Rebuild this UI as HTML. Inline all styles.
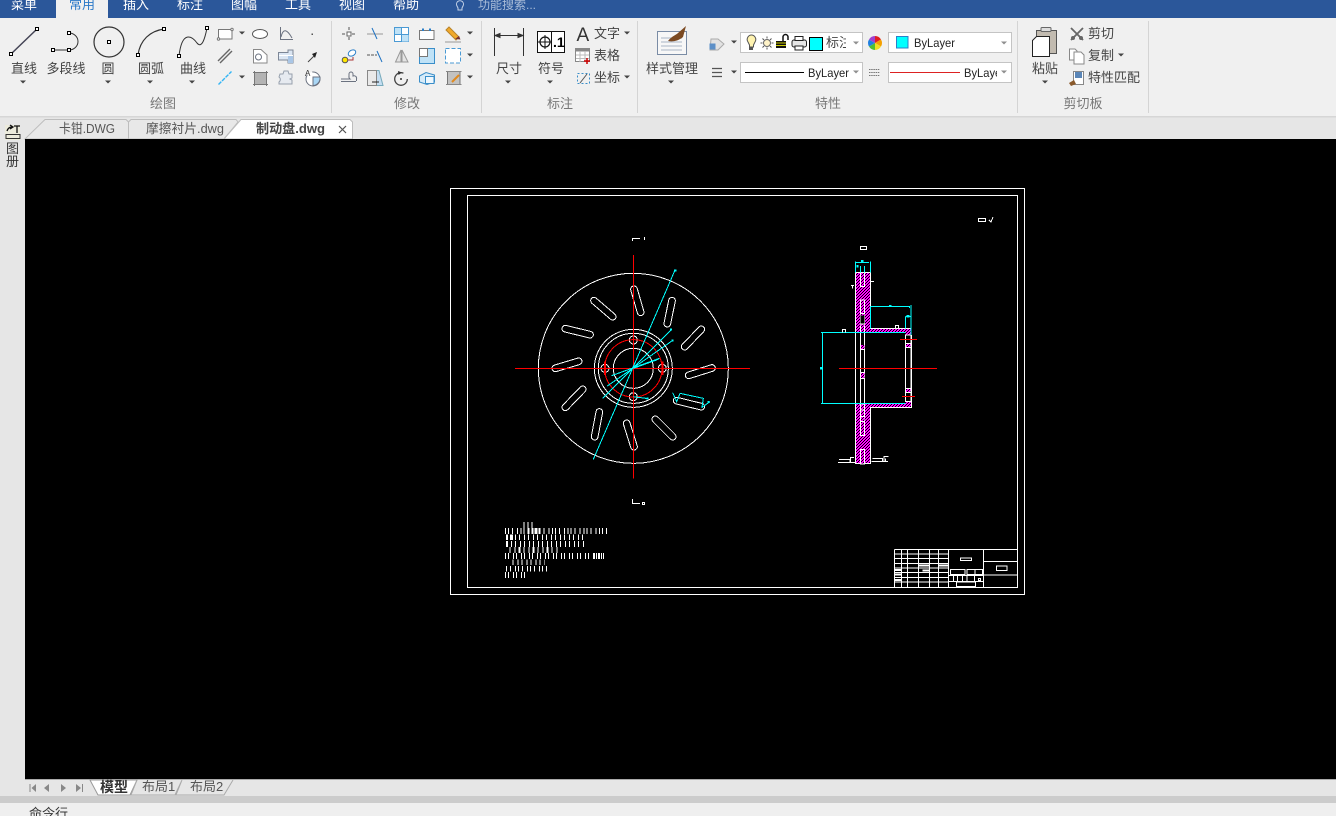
<!DOCTYPE html>
<html><head><meta charset="utf-8"><title>制动盘.dwg</title>
<style>
html,body{margin:0;padding:0;background:#000;overflow:hidden;width:1336px;height:816px}
svg{display:block}
text{font-family:"Liberation Sans","Noto Sans CJK SC",sans-serif;font-size:13px;fill:#444}
.m{text-anchor:middle}
.t{fill:#fff;text-anchor:middle}
.i{fill:none;stroke:#6b7280;stroke-width:1}
.h{fill:#fff;stroke:#222;stroke-width:1}
.s{fill:#fff;stroke:#000;stroke-width:1}
.w{fill:none;stroke:#fff;stroke-width:3}
.c{fill:none;stroke:#00ffff;stroke-width:3}
.r{fill:none;stroke:#f00;stroke-width:3}
</style></head><body>
<svg width="1336" height="816" viewBox="0 0 1336 816" xmlns="http://www.w3.org/2000/svg">
<defs>
<pattern id="hatch" width="9" height="9" patternUnits="userSpaceOnUse"><rect width="9" height="9" fill="#ff00ff"/><rect x="0" y="0" width="3" height="3" fill="#000"/><rect x="3" y="6" width="3" height="3" fill="#000"/><rect x="6" y="3" width="3" height="3" fill="#000"/></pattern>
<path id="ar" d="M-3-1.500H3L0 1.500Z" fill="#444"/>
</defs>
<rect width="1336" height="816" fill="#e6e6e6"/>
<rect width="1336" height="18" fill="#2b579a"/>
<rect x="0" y="18" width="1336" height="98" fill="#f0f0f0"/>
<rect x="0" y="116" width="1336" height="1.500" fill="#d6d6d6"/>
<rect x="56" y="0" width="52" height="19" fill="#f0f0f0"/>
<g>
<text class="t" x="24" y="9">菜单</text><text class="m" x="82" y="9" style="fill:#2a78c8">常用</text><text class="t" x="136" y="9">插入</text><text class="t" x="190" y="9">标注</text><text class="t" x="244" y="9">图幅</text><text class="t" x="298" y="9">工具</text><text class="t" x="352" y="9">视图</text><text class="t" x="406" y="9">帮助</text>
<path d="M457 6a3.500 3.500 0 1 1 6 0l-1 2v2h-4V8z" fill="none" stroke="#c5d3e8"/>
<text x="478" y="9" style="font-size:12px;fill:#a9bcd8">功能搜索...</text>
</g>
<g stroke="#d4d4d4"><path d="M331.500 21V113M481.500 21V113M637.500 21V113M1017.500 21V113M1148.500 21V113"/></g>
<g class="labels">
<text class="m" x="24" y="73">直线</text><text class="m" x="66" y="73">多段线</text><text class="m" x="108" y="73">圆</text><text class="m" x="151" y="73">圆弧</text><text class="m" x="193" y="73">曲线</text>
<text class="m" x="163" y="108" style="fill:#777">绘图</text><text class="m" x="407" y="108" style="fill:#777">修改</text><text class="m" x="560" y="108" style="fill:#777">标注</text><text class="m" x="828" y="108" style="fill:#777">特性</text><text class="m" x="1083" y="108" style="fill:#777">剪切板</text>
<text class="m" x="509" y="73">尺寸</text><text class="m" x="551" y="73">符号</text><text x="594" y="38">文字</text><text x="594" y="60">表格</text><text x="594" y="82">坐标</text>
<text class="m" x="672" y="73">样式管理</text><text class="m" x="1045" y="73">粘贴</text><text x="1088" y="38">剪切</text><text x="1088" y="60">复制</text><text x="1088" y="82">特性匹配</text>
</g>
<g>
<use href="#ar" x="23" y="82"/><use href="#ar" x="108" y="82"/><use href="#ar" x="150" y="82"/><use href="#ar" x="192" y="82"/><use href="#ar" x="242" y="33"/><use href="#ar" x="242" y="77"/><use href="#ar" x="470" y="33"/><use href="#ar" x="470" y="55"/><use href="#ar" x="470" y="77"/><use href="#ar" x="508" y="82"/><use href="#ar" x="550" y="82"/><use href="#ar" x="627" y="33"/><use href="#ar" x="627" y="77"/><use href="#ar" x="671" y="82"/><use href="#ar" x="734" y="42"/><use href="#ar" x="734" y="72"/><use href="#ar" x="1045" y="82"/><use href="#ar" x="1121" y="55"/>
</g>
<!-- big draw icons -->
<g fill="none" stroke="#333">
<path d="M11 54L37 29" stroke-width="1.500" stroke="#445"/>
<path d="M53 50H69M69 33a9 8.500 0 0 1 0 17"/>
<circle cx="109" cy="42" r="15" stroke-width="1.200"/>
<path d="M138 55C140 40 150 31 164 29" stroke-width="1.200"/>
<path d="M179 56C182 30 192 36 197 43C202 49 205 38 207 28"/>
</g>
<g class="s">
<rect x="9.500" y="52.500" width="3" height="3"/><rect x="35.500" y="27.500" width="3" height="3"/>
<rect x="51.500" y="48.500" width="3" height="3"/><rect x="67.500" y="48.500" width="3" height="3"/><rect x="67.500" y="31.500" width="3" height="3"/>
<rect x="107.500" y="40.500" width="3" height="3"/>
<rect x="136.500" y="53.500" width="3" height="3"/><rect x="162.500" y="27.500" width="3" height="3"/>
<rect x="177.500" y="54.500" width="3" height="3"/><rect x="205.500" y="26.500" width="3" height="3"/>
</g>
<!-- small draw icons -->
<g transform="translate(210 22)">
<rect x="8.500" y="7.500" width="13.500" height="9.500" fill="#fff" stroke="#777"/><circle cx="8.500" cy="17" r="1.200" class="h" style="stroke:#777"/><circle cx="22" cy="7.500" r="1.200" class="h" style="stroke:#777"/>
<ellipse cx="50" cy="12" rx="7.500" ry="4.500" fill="#fff" stroke="#555"/>
<path d="M70.500 5V17.500H83M71 15C73 6 77 7 82 16" class="i"/>
<rect x="101.500" y="11.500" width="1.500" height="1.500" fill="#555"/>
<path d="M8 39L20 27M10 41L22 29" stroke="#666" stroke-width="1.400" fill="none"/>
<path d="M43.500 27.500H51L57 33V41H43.500Z" fill="#fff" stroke="#888"/><circle cx="48.500" cy="35" r="3" class="i"/>
<path d="M68.500 30.500H78V28H83V41H78V38H68.500Z" fill="#dbe6f3" stroke="#7c8696"/><rect x="78" y="34" width="5" height="7" fill="#a9c6e6"/><path d="M69 33.500H83" stroke="#fff"/>
<path d="M98 40L105 33" stroke="#444"/><path d="M102 32L107 30L105 36Z" fill="#222"/>
<path d="M8.500 62.500L21.500 49.500" stroke="#33b5f5" stroke-width="1.400" stroke-dasharray="4 1"/>
<rect x="44.500" y="50.500" width="12" height="12" fill="#b4b4b4" stroke="#777"/><path d="M43 50.500H58M43 62.500H58M44.500 49V64M56.500 49V64" stroke="#777"/>
<path d="M70 52h3l1-3h4l1 3h3v4l-2 1 2 1v4H69v-2a3 3 0 0 0 0-5z" fill="#e6eaf0" stroke="#97a0ad"/>
<circle cx="103" cy="57" r="7" fill="#fff" stroke="#6b7280" stroke-dasharray="26 6"/><path d="M103 55H110A7.500 7.500 0 0 1 103 63.500Z" fill="#a9d6f5" stroke="#6b7280"/><text x="95" y="54" style="font-size:8px;fill:#333">A</text>
</g>
<!-- modify icons -->
<g transform="translate(335 22)">
<path d="M7 12H21M14 5V19" stroke="#555" stroke-dasharray="3 2"/><rect x="12" y="10" width="4" height="4" fill="#fff" stroke="#666"/>
<path d="M32 12H48" stroke="#999"/><path d="M37 6L42 17" stroke="#1f72c2"/>
<rect x="59.500" y="5.500" width="14" height="14" fill="#fff" stroke="#4a9ad4"/><rect x="60" y="6" width="6.500" height="6.500" fill="#bfe2f7"/><rect x="67" y="13" width="6.500" height="6.500" fill="#bfe2f7"/><path d="M66.500 5V20M59 12.500H74" stroke="#4a9ad4"/>
<rect x="84.500" y="8.500" width="14.500" height="9" fill="#fff" stroke="#777"/><path d="M88 6.500v2.500M95 6.500v2.500" stroke="#2b7fc9" stroke-width="2"/>
<path d="M111 8L114 5L124 15L121 18Z" fill="#f1a92b" stroke="#b8832a"/><path d="M120 17l4-3 1.500 3.500z" fill="#733"/><path d="M110 20H126" stroke="#999"/>
<circle cx="10" cy="38" r="2.800" fill="#ffe600" stroke="#555"/><ellipse cx="17" cy="31" rx="4" ry="2.800" fill="#fff" stroke="#2b7fc9" transform="rotate(-30 17 31)"/><path d="M13 38H18V35" stroke="#a33" fill="none"/>
<path d="M32 33H42" stroke="#555" stroke-dasharray="3 1"/><path d="M42 29L47 40" stroke="#1f72c2"/>
<path d="M66 28V40H60.500ZM67 28L73 40H67Z" fill="#e4e4e4" stroke="#999"/>
<rect x="84.500" y="26.500" width="15" height="15" fill="#bfe2f7" stroke="#3a8ec9"/><rect x="84.500" y="26.500" width="8" height="8" fill="#fff" stroke="#777"/>
<rect x="110.500" y="26.500" width="15" height="14.500" fill="#fff" stroke="#4a9ad4" stroke-dasharray="4 2"/>
<path d="M6 59.500H21M6 57H15a3 3 0 0 1-1-3v-2a2 2 0 0 1 4 0v2a2.500 2.500 0 0 1 3.500 3v2" class="i" stroke-width=".9"/>
<path d="M38 48.500H44L48 63.500H38Z" fill="#c5def2" stroke="#7ab"/><rect x="32.500" y="48.500" width="9" height="15" fill="#e9e9e9" stroke="#888"/><path d="M37 60H44" stroke="#222"/>
<circle cx="66" cy="57" r="6.300" fill="none" stroke="#444" stroke-width="1.300" stroke-dasharray="32 8"/><circle cx="66" cy="57" r="1" fill="#333"/><path d="M63 49L67 50.500L63.500 53Z" fill="#333"/>
<path d="M84.500 54L91 50.500L99.500 53V60L92 62.500L84.500 60Z" fill="#d7ebf8" stroke="#3a8ec9"/><rect x="90.500" y="54.500" width="8.500" height="7" fill="#eef7fd" stroke="#3a8ec9"/>
<rect x="112.500" y="49.500" width="12.500" height="13" fill="#c2c2c2" stroke="#777"/><path d="M111 49.500H126.500M111 62.500H126.500" stroke="#888"/><path d="M117 60L124 53" stroke="#e08a1e" stroke-width="2"/>
</g>
<!-- annotate -->
<g fill="none" stroke="#333">
<path d="M494.500 28V56M523.500 28V56M495 35.500H523" />
<path d="M495 35.500L500 33.500V37.500ZM523 35.500L518 33.500V37.500Z" fill="#333"/>
</g>
<rect x="537.500" y="31.500" width="27" height="21" fill="#fff" stroke="#111"/><path d="M551.500 31V52" stroke="#111"/><circle cx="545" cy="42" r="5" fill="none" stroke="#111" stroke-width="1.200"/><path d="M538 42H551M545 35V49" stroke="#111"/>
<text x="553" y="47" style="font-size:14px;font-weight:bold;fill:#000">.1</text>
<text x="576.500" y="41" style="font-size:19px;fill:#333">A</text>
<rect x="575.500" y="48.500" width="14" height="13" fill="#fff" stroke="#888"/><rect x="575.500" y="48.500" width="14" height="3" fill="#888"/><path d="M580 51V62M585 51V62M576 55H589M576 58.500H589" stroke="#bbb"/><path d="M587 58V64M584 61H590" stroke="#c00" stroke-width="1.500"/>
<g stroke="#3a8ec9" stroke-dasharray="2 2" fill="none"><rect x="577.500" y="73.500" width="12" height="10"/></g><path d="M580 83L587 74" stroke="#555"/>
<!-- style mgr -->
<rect x="657.500" y="31.500" width="29" height="23" fill="#f7f7f7" stroke="#7a8ca5"/><path d="M661 38H682M661 42H682M661 46H682M661 50H682" stroke="#a8b4c6"/><path d="M668 41C672 36 676 35 678 33L686 26L683 37C678 41 673 42 668 41Z" fill="#7b4a22"/>
<!-- properties -->
<path d="M711 39H718L724 44L718 50H710Z" fill="#e2e2e2" stroke="#aaa"/><rect x="709.500" y="43.500" width="6" height="6" fill="#5c8fc7"/>
<path d="M712 68.500H722M712 72.500H722M712 76.500H722" stroke="#555" stroke-width="1.300"/>
<g fill="#fff" stroke="#c4c4c4"><rect x="740.500" y="32.500" width="122" height="20"/><rect x="888.500" y="32.500" width="123" height="20"/><rect x="740.500" y="62.500" width="122" height="20"/><rect x="888.500" y="62.500" width="123" height="20"/></g>
<path d="M751 35a4.500 4.500 0 0 1 4 7l-1.500 3v2h-4v-2l-1.500-3a4.500 4.500 0 0 1 3-7z" fill="#fff3b0" stroke="#555"/><rect x="749" y="47" width="4" height="3" fill="#555"/>
<circle cx="767" cy="43" r="3.500" fill="#fff3c8" stroke="#666"/><path d="M767 36.500v2M767 47.500v2M760.500 43h2M771.500 43h2M762.500 38.500l1.500 1.500M770 46l1.500 1.500M771.500 38.500L770 40M764 46l-1.500 1.500" stroke="#555"/>
<rect x="776" y="41" width="10" height="7" fill="#111"/><path d="M776 43h10M776 45.500h10" stroke="#cc0"/><path d="M783 41V37a2.500 2.500 0 0 1 5 0v3" fill="none" stroke="#111" stroke-width="1.500"/>
<rect x="792" y="40" width="14.500" height="7" rx="2" fill="#e6e6e6" stroke="#222"/><rect x="795" y="36.500" width="8" height="4" fill="#fff" stroke="#222"/><rect x="795" y="46" width="8" height="4" fill="#fff" stroke="#222"/>
<rect x="809.500" y="37.500" width="13" height="13" fill="#0ff" stroke="#000"/>
<svg x="826" y="33" width="20" height="19"><text x="0" y="14">标注</text></svg>
<use href="#ar" x="856" y="43" style="opacity:.6"/><use href="#ar" x="856" y="72" style="opacity:.6"/><use href="#ar" x="1004" y="43" style="opacity:.6"/><use href="#ar" x="1004" y="72" style="opacity:.6"/>
<g transform="translate(875 43)"><path d="M0 0V-7A7 7 0 0 1 6-3.500Z" fill="#e02020"/><path d="M0 0L6-3.500A7 7 0 0 1 6 3.500Z" fill="#f5a000"/><path d="M0 0L6 3.500A7 7 0 0 1 0 7Z" fill="#f0e020"/><path d="M0 0V7A7 7 0 0 1-6 3.500Z" fill="#50c030"/><path d="M0 0L-6 3.500A7 7 0 0 1-6-3.500Z" fill="#2080e0"/><path d="M0 0L-6-3.500A7 7 0 0 1 0-7Z" fill="#a040d0"/></g>
<rect x="896.500" y="36.500" width="11.500" height="11.500" fill="#0ff" stroke="#2b7fc9"/>
<text x="914" y="47" textLength="41" lengthAdjust="spacingAndGlyphs" style="font-size:12px;fill:#222">ByLayer</text>
<path d="M745 72.500H804" stroke="#000"/>
<text x="808" y="77" textLength="41" lengthAdjust="spacingAndGlyphs" style="font-size:12px;fill:#222">ByLayer</text>
<path d="M869 69.500H880M869 72.500H880M869 75.500H880" stroke="#777" stroke-dasharray="1.500 .7"/>
<path d="M890 72.500H960" stroke="#d22"/>
<svg x="964" y="63" width="33" height="19"><text x="0" y="14" textLength="41" lengthAdjust="spacingAndGlyphs" style="font-size:12px;fill:#222">ByLayer</text></svg>
<!-- clipboard -->
<rect x="1036.500" y="30.500" width="20" height="23" fill="#c2bbb0" stroke="#555"/><rect x="1041" y="27.500" width="10" height="4" rx="1" fill="#ddd" stroke="#666"/>
<path d="M1036.500 36.500H1049.500V56.500H1032.500V40.500Z" fill="#fff" stroke="#222"/>
<path d="M1071 28L1083 40M1083 28L1071 40" stroke="#666" stroke-width="1.800"/><circle cx="1073" cy="38" r="2" fill="#666"/><circle cx="1081" cy="38" r="2" fill="#666"/>
<path d="M1069.500 49H1075L1077 51V60H1069.500Z" fill="#fff" stroke="#888"/><path d="M1074 52H1081L1084 55V64H1074Z" fill="#fff" stroke="#888"/>
<rect x="1073.500" y="71.500" width="10" height="13" fill="#fff" stroke="#888"/><rect x="1075" y="72" width="7" height="6" fill="#5a86b8"/><path d="M1069 83L1074 80L1076 84L1071 86Z" fill="#8a5a2c"/>
<!-- doc tabs -->
<path d="M25 139L45 119.500H126L128.500 122V139Z" fill="#e8e8e8" stroke="#bdbdbd"/>
<path d="M128.500 139V122L131 119.500H236L238 122L224 139Z" fill="#e8e8e8" stroke="#bdbdbd"/>
<path d="M224 139L241 119.500H350L352.500 122V139Z" fill="#fff" stroke="#bdbdbd"/>
<text x="59" y="133" textLength="56" lengthAdjust="spacingAndGlyphs" style="font-size:13px;fill:#555">卡钳.DWG</text>
<text x="146" y="133" textLength="78" lengthAdjust="spacingAndGlyphs" style="font-size:13px;fill:#555">摩擦衬片.dwg</text>
<text x="256" y="133" textLength="69" lengthAdjust="spacingAndGlyphs" style="font-size:13px;font-weight:bold;fill:#444">制动盘.dwg</text>
<path d="M339 126L346 133M346 126L339 133" stroke="#555" stroke-width="1.200"/>
<!-- left strip -->
<rect x="5" y="125" width="15" height="15" fill="#ecebdc"/><path d="M7 131C8 128 10 127 12 127M10 125L13 127L10 129M14 126H20M17 126V133" stroke="#111" stroke-width="1.300" fill="none"/><rect x="6" y="134.500" width="14" height="4" fill="none" stroke="#333"/>
<text x="6" y="153" style="font-size:13px;fill:#333">图</text><text x="6" y="166" style="font-size:13px;fill:#333">册</text>
<!-- canvas -->
<rect x="25" y="139" width="1311" height="640" fill="#000"/>
<rect x="25" y="779" width="1311" height="1" fill="#aaa"/>
<g shape-rendering="crispEdges" fill="none" stroke="#fff">
<rect x="450.500" y="188.500" width="574" height="406"/><rect x="467.500" y="195.500" width="550" height="392"/>
<rect x="978.500" y="218.500" width="7" height="3"/><path d="M989 220L991 222L993 217"/>
<rect x="860.500" y="246.500" width="6" height="3"/>
<path d="M632.500 241V238.500H640M644.500 237V240"/><path d="M632.500 499V503.500H640"/><rect x="642.500" y="502.500" width="2" height="2"/>
</g>
<!-- front view -->
<g transform="translate(500 230) scale(.33333)" shape-rendering="crispEdges">
<g fill="none"><circle cx="400" cy="415" r="285" class="w"/><circle cx="400" cy="415" r="117" class="w"/><circle cx="400" cy="415" r="105" class="w"/><circle cx="400" cy="415" r="60" class="w"/></g>
<g stroke="#fff" stroke-width="23" stroke-linecap="round"><path d="M402 178L422 247M516 212L502 281M604 298L554 350M636 414L566 436M604 530L530 512M518 620L466 568M402 650L380 580M284 620L298 546M196 532L248 478M166 415L236 394M196 296L270 314M282 212L338 260"/></g>
<g stroke="#000" stroke-width="17" stroke-linecap="round"><path d="M402 178L422 247M516 212L502 281M604 298L554 350M636 414L566 436M604 530L530 512M518 620L466 568M402 650L380 580M284 620L298 546M196 532L248 478M166 415L236 394M196 296L270 314M282 212L338 260"/></g>
<g class="w" fill="none"><circle cx="400" cy="330" r="12"/><circle cx="400" cy="500" r="12"/><circle cx="315" cy="415" r="12"/><circle cx="487" cy="415" r="12"/></g>
<circle cx="400" cy="415" r="86" class="r"/>
<path d="M315 395V435M487 395V435" stroke="#f00" stroke-width="6"/>
<path d="M45 415H750M400 75V745" class="r"/>
<path d="M526 118L280 688M515 298L308 505M520 330L322 468M478 385L335 437M400 415L475 388M400 500L445 506M518 488L530 515L540 490L610 505L606 532L630 515" class="c"/>
<path d="M522 118h8v6h-8zM510 296h6v6h-6zM514 328h6v6h-6zM440 503h6v6h-6zM622 513h6v6h-6z" fill="#0ff"/>
</g>
<!-- side view -->
<g transform="translate(800 240) scale(.33333)" shape-rendering="crispEdges">
<rect x="167" y="97" width="44" height="573" fill="url(#hatch)"/>
<rect x="211" y="266" width="122" height="10" fill="url(#hatch)"/>
<rect x="211" y="491" width="122" height="11" fill="url(#hatch)"/>
<rect x="316" y="266" width="18" height="20" fill="url(#hatch)"/><rect x="316" y="484" width="18" height="18" fill="url(#hatch)"/>
<rect x="166" y="277" width="48" height="213" fill="#000"/>
<rect x="181.500" y="97" width="12.500" height="43" fill="#000" class="w"/>
<rect x="181.500" y="180" width="12.500" height="406" fill="#000" class="w"/>
<rect x="181.500" y="628" width="12.500" height="44" fill="#000" class="w"/>
<rect x="182" y="222" width="11" height="36" fill="url(#hatch)"/><rect x="182" y="226" width="11" height="24" fill="#000"/>
<rect x="183" y="315" width="10" height="13" fill="url(#hatch)"/><rect x="183" y="398" width="10" height="17" fill="url(#hatch)"/><rect x="183" y="530" width="10" height="14" fill="url(#hatch)"/>
<rect x="316.500" y="285" width="17" height="199" fill="#000" class="w"/>
<rect x="318" y="310" width="14" height="12" fill="url(#hatch)"/><rect x="318" y="445" width="14" height="13" fill="url(#hatch)"/>
<path d="M167 97V670H181M194 670H211V502H334V285M211 97V265H334M167 97H181M194 97H211M182 220H193M182 252H193M182 328H193M182 398H193M182 415H193M182 492H193M182 510H193M182 530H193M182 545H193M317 310H333M317 322H333M317 445H333M317 458H333" class="w"/>
<path d="M166 64V97M211 64V97M166 68H207M194 78V97M181 78V97M211 199H329V204M211 199V265M333 195V285M316 230V265M316 230H333M63 277H316M67 277V490M63 490H316" class="c"/>
<path d="M60 381h7v8h-7zM170 75h6v8h-6zM267 195h8v4h-8zM320 225h8v8h-8zM183 60h8v6h-8z" fill="#0ff"/>
<path d="M127 277V268H136V277M286 265V256H296V265M211 110V125H222M153 137H162M158 137V146M114 667H165M117 658H150V667M151 667V652H162M214 665H264M217 655H247V665M252 665V650H265M256 655V665" class="w"/>
<path d="M117 385H411M300 298H351M306 469H345" class="r"/>
</g>
<!-- note text -->
<g transform="translate(495 515) scale(.33333)" shape-rendering="crispEdges" stroke="#fff" fill="none" stroke-width="17">
<path d="M85 30H118" stroke-dasharray="3 9"/>
<path d="M30 48H348" stroke-dasharray="3 6 3 9 3 12 3 8"/>
<path d="M98 48H135" stroke-dasharray="6 6 3 6"/>
<path d="M33 67H276" stroke-dasharray="3 9 3 12"/>
<path d="M33 67H62" stroke-dasharray="6 9"/>
<path d="M33 87H270" stroke-dasharray="3 12 3 9"/>
<path d="M33 87H54" stroke-dasharray="6 15"/>
<path d="M43 105H195" stroke-dasharray="3 12 3 9 6 9"/>
<path d="M30 123H327" stroke-dasharray="3 6 3 12"/>
<path d="M294 123H327" stroke-dasharray="6 3 3 3"/>
<path d="M53 142H150" stroke-dasharray="3 12 3 9"/>
<path d="M33 161H158" stroke-dasharray="3 9 3 12 3 6"/>
<path d="M30 180H96" stroke-dasharray="3 6 3 12"/>
</g>
<!-- title block -->
<g transform="translate(885 540) scale(.33333)" shape-rendering="crispEdges" fill="none" class="w">
<path d="M190 28V142M295 28V142M295 64H398M295 105H398M28 28H398"/>
<path d="M28 28V142H398"/>
<path d="M28 42H190M28 56H190M28 70H190M28 84H190M28 98H190M28 112H190M28 126H190"/>
<path d="M50 28V142M68 28V142M100 28V142M134 28V142M160 28V142"/>
<rect x="226" y="54" width="34" height="8"/><rect x="334" y="78" width="32" height="14"/>
<rect x="196" y="88" width="44" height="16"/><rect x="246" y="88" width="46" height="16"/><path d="M270 88V104M190 106H295M190 124H295M205 106V124M218 106V124M232 106V124M246 106V124M269 106V124"/>
<rect x="214" y="126" width="58" height="14"/><rect x="280" y="115" width="6" height="6"/>
<path d="M100 76H134M160 76H192M112 92H134M30 90H50M30 104H50M30 120H50" stroke-width="6"/>
</g>
<!-- bottom tabs -->
<rect x="25" y="780" width="1311" height="16" fill="#e6e6e6"/>
<rect x="0" y="796" width="1336" height="7" fill="#cccccc"/>
<rect x="0" y="803" width="1336" height="13" fill="#efefef"/>
<g fill="#888"><path d="M36 784L31.500 788L36 792Z"/><path d="M49 784L44 788L49 792Z"/><path d="M61 784L66 788L61 792Z"/><path d="M76 784L81 788L76 792Z"/></g>
<path d="M30 784V792M82.500 784V792" stroke="#888"/>
<path d="M90 780L98 795H130L137 780Z" fill="#fff" stroke="#999"/>
<path d="M137 780L131 795H175L182 780M182 780L176 795H224L233 780" fill="none" stroke="#aaa"/>
<text x="100" y="792" style="font-size:14px;font-weight:bold;fill:#333">模型</text>
<text x="142" y="791" style="fill:#555">布局1</text><text x="190" y="791" style="fill:#555">布局2</text>
<text x="29" y="818" style="fill:#333">命令行</text>
</svg>
</body></html>
